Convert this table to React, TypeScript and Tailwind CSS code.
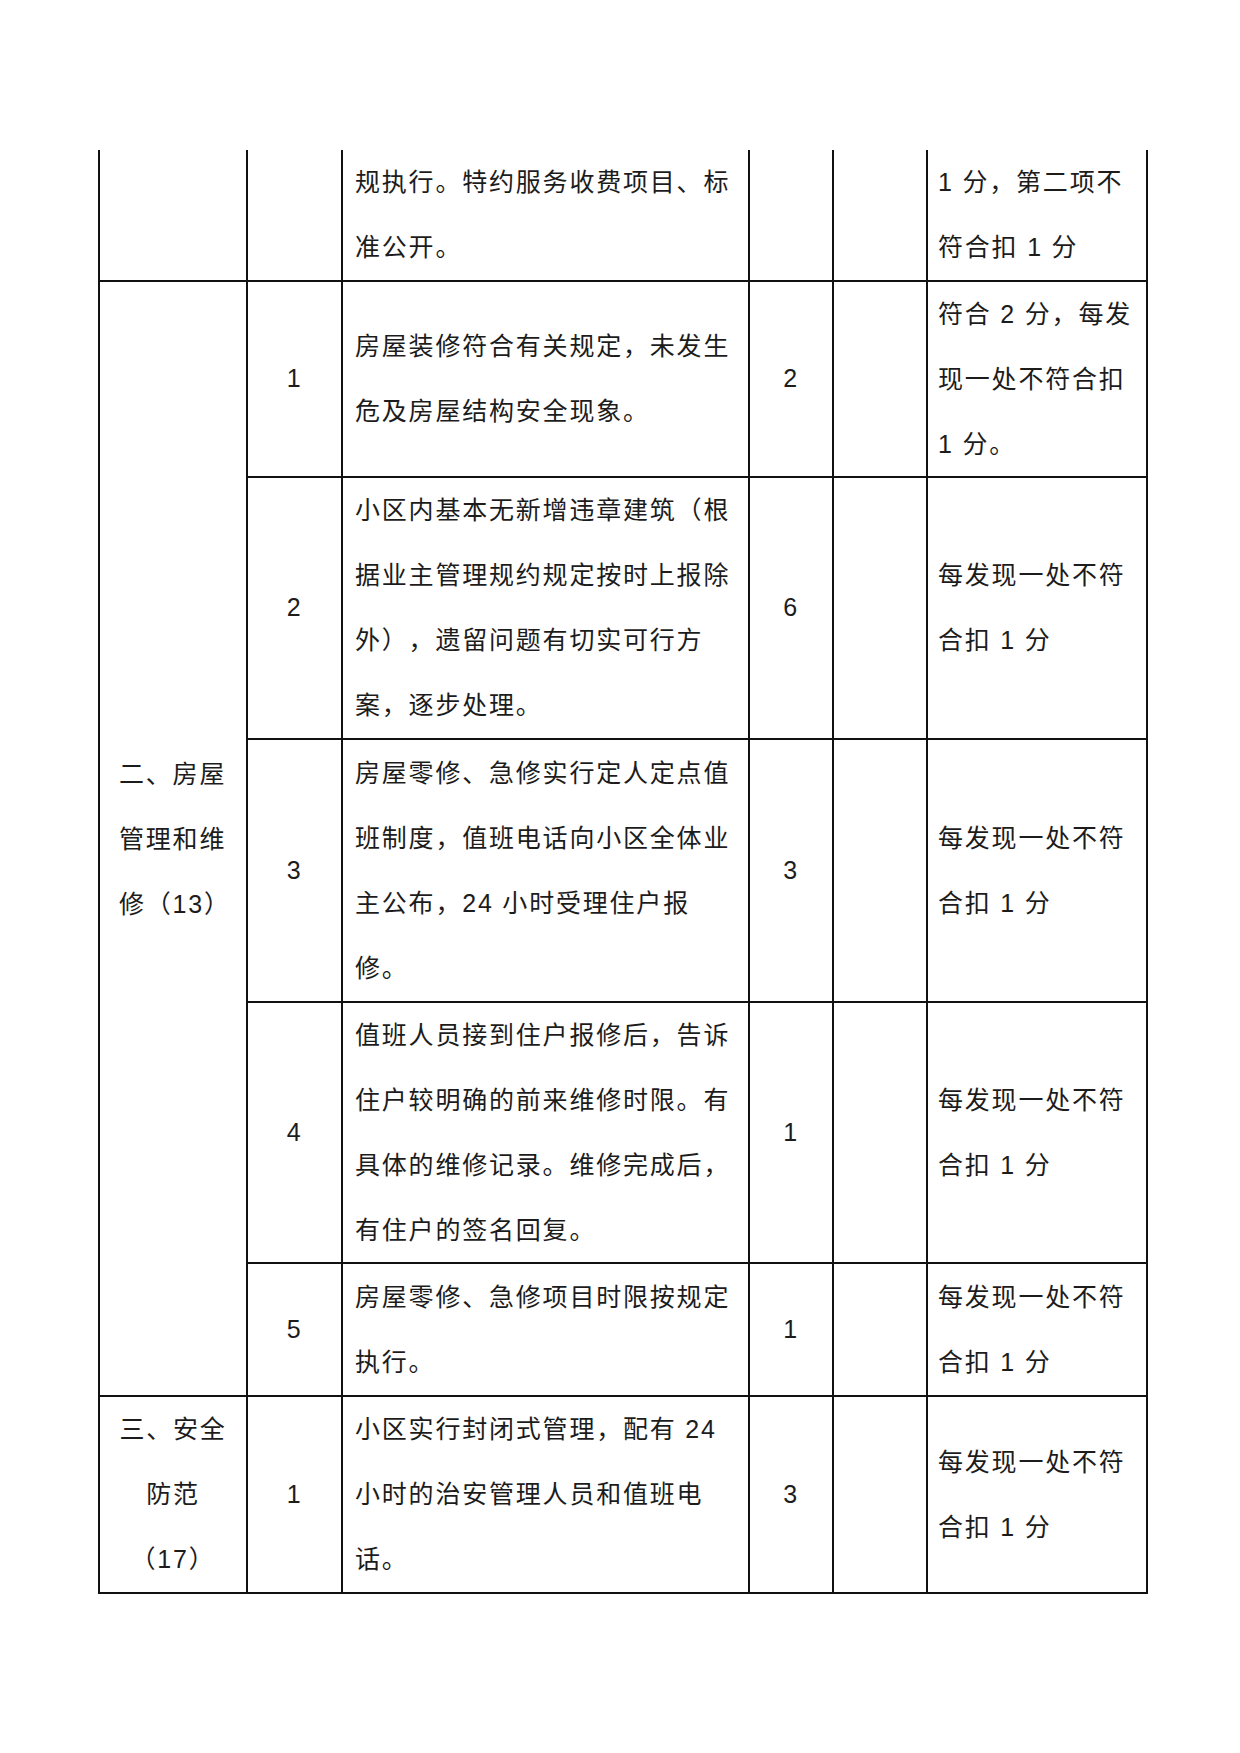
import React from "react";

type Row = {
  num: string;
  content: string[];
  score: string;
  rule: string[];
};

const ruleEach = ["每发现一处不符", "合扣 1 分"];

const rows: Row[] = [
  {
    num: "",
    content: ["规执行。特约服务收费项目、标", "准公开。"],
    score: "",
    rule: ["1 分，第二项不", "符合扣 1 分"],
  },
  {
    num: "1",
    content: ["房屋装修符合有关规定，未发生", "危及房屋结构安全现象。"],
    score: "2",
    rule: ["符合 2 分，每发", "现一处不符合扣", "1 分。"],
  },
  {
    num: "2",
    content: ["小区内基本无新增违章建筑（根", "据业主管理规约规定按时上报除", "外），遗留问题有切实可行方", "案，逐步处理。"],
    score: "6",
    rule: ruleEach,
  },
  {
    num: "3",
    content: ["房屋零修、急修实行定人定点值", "班制度，值班电话向小区全体业", "主公布，24 小时受理住户报", "修。"],
    score: "3",
    rule: ruleEach,
  },
  {
    num: "4",
    content: ["值班人员接到住户报修后，告诉", "住户较明确的前来维修时限。有", "具体的维修记录。维修完成后，", "有住户的签名回复。"],
    score: "1",
    rule: ruleEach,
  },
  {
    num: "5",
    content: ["房屋零修、急修项目时限按规定", "执行。"],
    score: "1",
    rule: ruleEach,
  },
  {
    num: "1",
    content: ["小区实行封闭式管理，配有 24", "小时的治安管理人员和值班电", "话。"],
    score: "3",
    rule: ruleEach,
  },
];

// grid row placement, written out so tailwind picks them up
const rowStart = ["row-start-1", "row-start-2", "row-start-3", "row-start-4", "row-start-5", "row-start-6", "row-start-7"];

function Lines({ lines }: { lines: string[] }) {
  return (
    <>
      {lines.map((l, i) => (
        <div key={i} className="whitespace-nowrap leading-[65px]">
          {l}
        </div>
      ))}
    </>
  );
}

export default function App() {
  return (
    <div
      className="min-h-[1753px] w-[1240px] bg-white pt-[150px] pl-[98px] text-[25px] tracking-[1.8px] text-[#1c1c1c] [text-spacing-trim:space-all]"
      style={{ fontFamily: '"Liberation Sans", "Noto Sans CJK SC", sans-serif' }}
    >
      <div className="grid w-fit grid-cols-[146px_93px_405px_82px_92px_218px] grid-rows-[130px_194px_260px_261px_259px_131px_195px] gap-[2px] bg-[#111] px-[2px] pb-[2px]">
        {/* section labels */}
        <div className="col-start-1 row-start-1 bg-white" />
        <div className="col-start-1 row-start-2 row-span-5 bg-white pt-[460px]">
          <div className="mx-auto w-[108px]">
            <Lines lines={["二、房屋", "管理和维", "修（13）"]} />
          </div>
        </div>
        <div className="col-start-1 row-start-7 flex flex-col justify-center bg-white text-center">
          <Lines lines={["三、安全", "防范", "（17）"]} />
        </div>

        {rows.map((r, i) => (
          <React.Fragment key={i}>
            <div className={`col-start-2 ${rowStart[i]} flex items-center justify-center bg-white`}>{r.num}</div>
            <div className={`col-start-3 ${rowStart[i]} flex flex-col justify-center bg-white pl-[12px]`}>
              <Lines lines={r.content} />
            </div>
            <div className={`col-start-4 ${rowStart[i]} flex items-center justify-center bg-white`}>{r.score}</div>
            <div className={`col-start-5 ${rowStart[i]} bg-white`} />
            <div className={`col-start-6 ${rowStart[i]} flex flex-col justify-center bg-white pl-[10px]`}>
              <Lines lines={r.rule} />
            </div>
          </React.Fragment>
        ))}
      </div>
    </div>
  );
}
